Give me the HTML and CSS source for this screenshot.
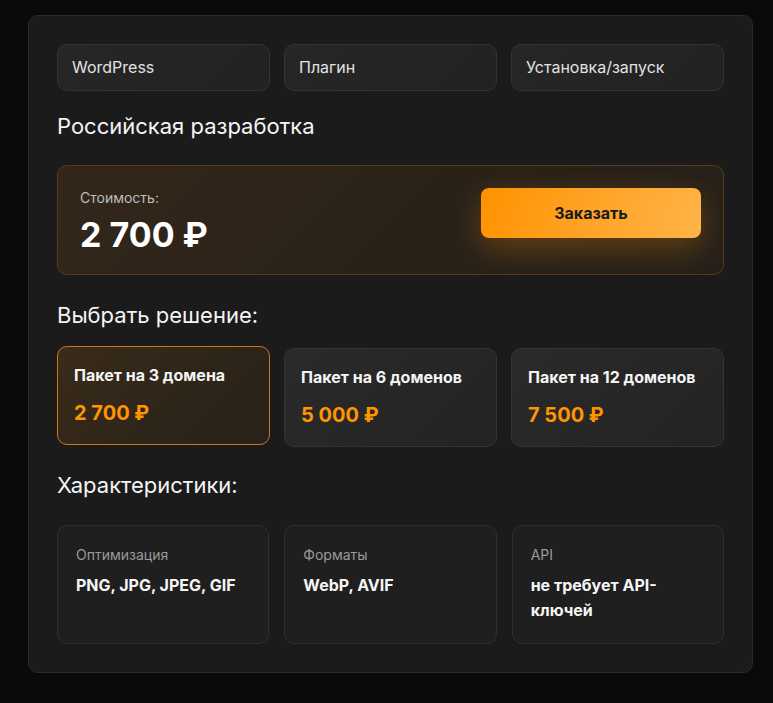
FILE: index.html
```html
<!DOCTYPE html>
<html lang="ru">
<head>
<meta charset="utf-8">
<title>Плагин</title>
<link rel="stylesheet" href="styles.css">
</head>
<body>
<div class="card">
  <div class="tags">
    <div class="tag">WordPress</div>
    <div class="tag">Плагин</div>
    <div class="tag">Установка/запуск</div>
  </div>

  <h2 class="heading heading-first">Российская разработка</h2>

  <div class="price-box">
    <div class="price-info">
      <div class="price-label">Стоимость:</div>
      <div class="price-value">2 700 ₽</div>
    </div>
    <button class="order-btn">Заказать</button>
  </div>

  <h2 class="heading heading-second">Выбрать решение:</h2>

  <div class="packages">
    <div class="package active">
      <div class="package-title">Пакет на 3 домена</div>
      <div class="package-price">2 700 ₽</div>
    </div>
    <div class="package">
      <div class="package-title">Пакет на 6 доменов</div>
      <div class="package-price">5 000 ₽</div>
    </div>
    <div class="package">
      <div class="package-title">Пакет на 12 доменов</div>
      <div class="package-price">7 500 ₽</div>
    </div>
  </div>

  <h2 class="heading heading-third">Характеристики:</h2>

  <div class="specs">
    <div class="spec">
      <div class="spec-label">Оптимизация</div>
      <div class="spec-value">PNG, JPG, JPEG, GIF</div>
    </div>
    <div class="spec">
      <div class="spec-label">Форматы</div>
      <div class="spec-value">WebP, AVIF</div>
    </div>
    <div class="spec">
      <div class="spec-label">API</div>
      <div class="spec-value">не требует API-ключей</div>
    </div>
  </div>
</div>
</body>
</html>
```

FILE: styles.css
```css
* { box-sizing: border-box; }

html, body {
  margin: 0;
  background: #0a0a0a;
}

body {
  padding: 15px 20px 30px 28px;
  font-family: Inter, "Noto Sans", sans-serif;
  color: #f2f2f2;
}

.card {
  width: 725px;
  background: #1b1b1b;
  border: 1px solid #2a2a2a;
  border-radius: 10px;
  padding: 28px;
}

.tags {
  display: grid;
  grid-template-columns: repeat(3, 1fr);
  gap: 14px;
}

.tag {
  background: linear-gradient(135deg, #262626, #222222);
  border: 1px solid #333333;
  border-radius: 10px;
  padding: 13px 14px;
  font-size: 16px;
  line-height: 19px;
  color: #e2e2e2;
}

.heading {
  font-size: 22px;
  font-weight: 400;
  line-height: 26px;
  color: #f5f5f5;
}

.heading-first { margin: 22px 0 26px; }
.heading-second { margin: 27px 0 20px; }
.heading-third { margin: 25px 0 27px; }

.price-box {
  display: flex;
  justify-content: space-between;
  align-items: flex-start;
  padding: 22px 22px 19px 22px;
  border: 1px solid #5a3a12;
  border-radius: 10px;
  background: linear-gradient(135deg, #34271a 0%, #2a2219 50%, #262019 100%);
}

.price-label {
  font-size: 14px;
  line-height: 20px;
  color: #bdbdbd;
}

.price-value {
  margin-top: 7px;
  font-size: 34px;
  line-height: 40px;
  font-weight: 700;
  color: #ffffff;
}

.order-btn {
  width: 220px;
  height: 50px;
  border: none;
  border-radius: 8px;
  background: linear-gradient(110deg, #ff9200 0%, #ffa52a 55%, #ffb447 100%);
  box-shadow: 0 10px 30px rgba(255, 149, 0, 0.28);
  font-family: Inter, "Noto Sans", sans-serif;
  font-size: 16px;
  font-weight: 700;
  color: #1a1a1a;
}

.packages {
  display: grid;
  grid-template-columns: repeat(3, 1fr);
  gap: 14px;
}

.package {
  background: linear-gradient(135deg, #2a2a2a, #232323);
  border: 1px solid #343434;
  border-radius: 10px;
  padding: 18px 16px 19px;
}

.package.active {
  background: linear-gradient(135deg, #3a2b1a 0%, #2e2519 55%, #28221b 100%);
  border-color: #c7791a;
  transform: translateY(-2px);
}

.package-title {
  font-size: 16px;
  line-height: 21px;
  font-weight: 700;
  color: #f5f5f5;
}

.package-price {
  margin-top: 15px;
  font-size: 20px;
  line-height: 24px;
  font-weight: 700;
  color: #ff9500;
}

.specs {
  display: grid;
  grid-template-columns: repeat(3, 1fr);
  gap: 15px;
}

.spec {
  background: #1f1f1f;
  border: 1px solid #2f2f2f;
  border-radius: 10px;
  padding: 19px 18px 19px;
}

.spec-label {
  font-size: 14px;
  line-height: 19.6px;
  color: #9a9a9a;
}

.spec-value {
  margin-top: 8px;
  font-size: 16px;
  line-height: 25.6px;
  font-weight: 700;
  color: #f5f5f5;
}
```
